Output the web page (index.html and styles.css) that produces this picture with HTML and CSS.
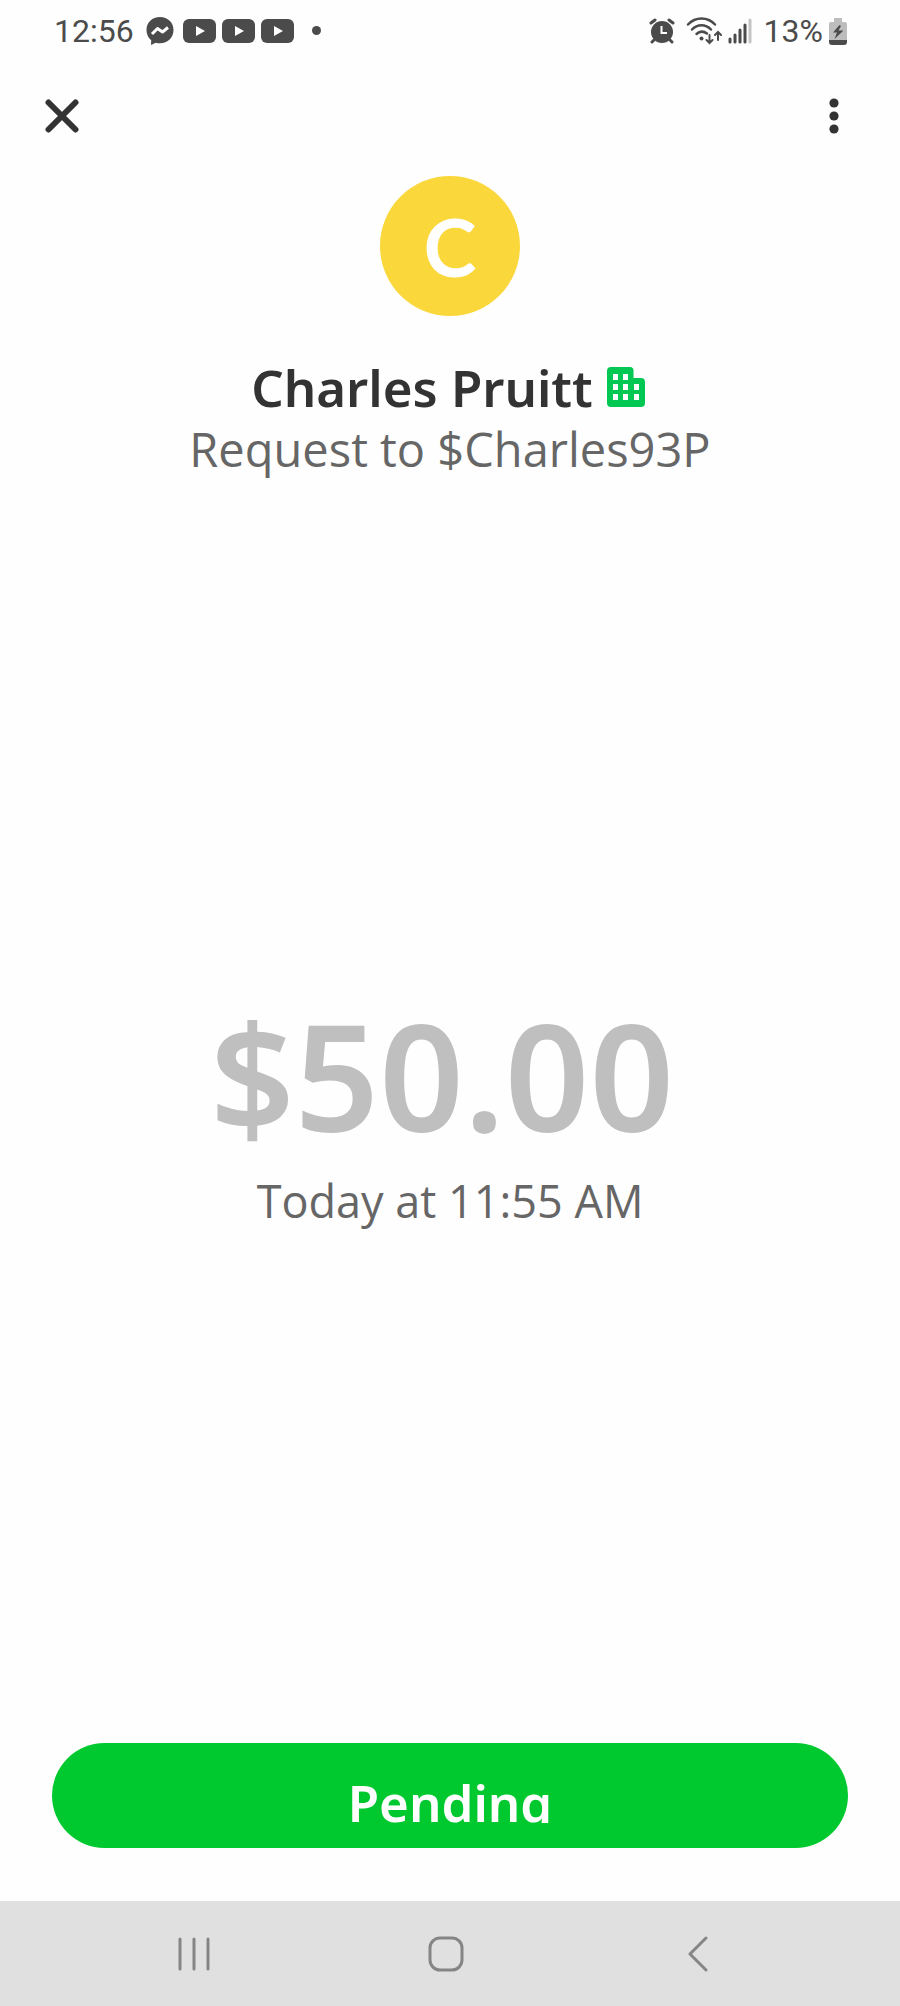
FILE: index.html
```html
<!DOCTYPE html>
<html lang="en">
<head>
<meta charset="utf-8">
<meta name="viewport" content="width=device-width, initial-scale=1">
<title>Payment request</title>
<link rel="stylesheet" href="styles.css">
</head>
<body>
<div class="screen">
  <div class="status">
    <div class="status-group">
      <span class="status-text">12:56</span>
      <svg class="messenger" width="28" height="28" viewBox="0 0 28 28"><path fill="#4b4b4b" d="M14 0C6.2 0 .5 5.400.5 13c0 4.200 1.700 7.800 4.700 10.200L5 28l4.700-2.300c1.400.4 2.800.6 4.300.6 7.800 0 13.500-5.600 13.500-13.200S21.800 0 14 0z"/><path fill="none" stroke="#fff" stroke-width="3" stroke-linejoin="round" d="M6 17l5.500-5.500 5 3.500 5.500-4.500"/></svg>
      <div class="videos">
        <svg width="33" height="24" viewBox="0 0 33 24"><rect width="33" height="24" rx="6" fill="#4b4b4b"/><path fill="#fff" d="M13 7l9 5-9 5z"/></svg>
        <svg width="33" height="24" viewBox="0 0 33 24"><rect width="33" height="24" rx="6" fill="#4b4b4b"/><path fill="#fff" d="M13 7l9 5-9 5z"/></svg>
        <svg width="33" height="24" viewBox="0 0 33 24"><rect width="33" height="24" rx="6" fill="#4b4b4b"/><path fill="#fff" d="M13 7l9 5-9 5z"/></svg>
      </div>
      <span class="more-dot"></span>
    </div>
    <div class="status-group">
      <svg width="26" height="26" viewBox="0 0 26 26"><circle cx="13" cy="14" r="11" fill="#4b4b4b"/><path fill="none" stroke="#4b4b4b" stroke-width="3" stroke-linecap="round" d="M2 5l4-3M24 5l-4-3M5 22l-2 2M21 22l2 2"/><path fill="none" stroke="#fff" stroke-width="2" d="M12.500 8v7H18"/></svg>
      <svg class="wifi" width="36" height="28" viewBox="0 0 36 28"><g fill="none" stroke="#4b4b4b" stroke-width="2.500" stroke-linecap="round"><path d="M2 7.500C9.500-.5 21.500-.5 29 7.500M6 12.500c5.500-5.700 13.500-5.700 19 0M10.500 17c3.200-3 7-3 10.500-.5"/><path stroke-width="2" d="M23.500 18v8M20.500 23l3 3 3-3M32 23v-8M29 18l3-3 3 3"/></g><circle cx="15.500" cy="21.500" r="2" fill="#4b4b4b"/></svg>
      <svg class="signal" width="24" height="26" viewBox="0 0 24 26"><path fill="none" stroke="#4b4b4b" stroke-width="3" stroke-linecap="round" d="M2 21v3M7 17v7M12 12v12M17 7v17"/><path stroke="#c4c4c4" stroke-width="3" stroke-linecap="round" d="M22 2v22"/></svg>
      <span class="status-text percent">13%</span>
      <svg width="18" height="28" viewBox="0 0 18 28"><path fill="#bdbdbd" d="M5 1h8v4h3q2 0 2 2v16H0V7q0-2 2-2h3z"/><path fill="#4b4b4b" d="M0 23h18v2q0 3-3 3H3q-3 0-3-3zM10.500 8L4 15.500h4L5.500 22l9-8.500h-5L12 9z"/></svg>
    </div>
  </div>

  <header class="toolbar">
    <button class="icon-button" type="button" aria-label="Close"><svg width="34" height="34" viewBox="0 0 34 34"><path stroke="#333" stroke-width="6" stroke-linecap="round" d="M3.500 3.500l27 27M30.500 3.500l-27 27"/></svg></button>
    <button class="icon-button" type="button" aria-label="More options"><svg width="10" height="36" viewBox="0 0 10 36"><g fill="#333"><circle cx="5" cy="5" r="4.600"/><circle cx="5" cy="18" r="4.600"/><circle cx="5" cy="31" r="4.600"/></g></svg></button>
  </header>

  <main class="content">
    <section class="person">
      <div class="avatar">C</div>
      <div class="name-row">
        <h1 class="name">Charles Pruitt</h1>
        <svg width="38" height="40" viewBox="0 0 38 40"><path fill="#00c853" d="M4 0h19q3.500 0 3.500 3.500V11H34q4 0 4 4v21q0 4-4 4H4q-4 0-4-4V4q0-4 4-4z"/><g fill="#fff"><path d="M6 7h5v6H6zM16 7h5v6h-5zM6 17h5v6H6zM16 17h5v6h-5zM27 17h5v6h-5zM6 27h5v6H6zM16 27h5v6h-5zM27 27h5v6h-5z"/></g></svg>
      </div>
      <p class="detail">Request to $Charles93P</p>
    </section>
    <section class="payment">
      <p class="amount">$50.00</p>
      <p class="detail date">Today at 11:55 AM</p>
    </section>
    <button class="pending" type="button"><span class="pending-label">Pending</span></button>
  </main>

  <nav class="system-nav">
    <button class="icon-button" type="button" aria-label="Recent apps"><svg width="32" height="34" viewBox="0 0 32 34"><path stroke="#858585" stroke-width="3" stroke-linecap="round" d="M2 2v30M16 2v30M30 2v30"/></svg></button>
    <button class="icon-button" type="button" aria-label="Home"><svg width="36" height="36" viewBox="0 0 36 36"><rect x="2" y="2" width="32" height="32" rx="10" fill="none" stroke="#858585" stroke-width="3"/></svg></button>
    <button class="icon-button" type="button" aria-label="Back"><svg width="20" height="36" viewBox="0 0 20 36"><path fill="none" stroke="#858585" stroke-width="3" stroke-linecap="round" stroke-linejoin="round" d="M18 2L2 18l16 16"/></svg></button>
  </nav>
</div>
</body>
</html>
```
FILE: styles.css
```css
* {
  box-sizing: border-box;
}

body {
  margin: 0;
  background: #fefefe;
  color: #333;
  font-family: "Open Sans", sans-serif;
}

h1,
p {
  margin: 0;
}

svg {
  display: block;
  flex: none;
}

button {
  border: 0;
  padding: 0;
  font: inherit;
}

.screen {
  display: flex;
  flex-direction: column;
  min-height: 100vh;
}

.status {
  display: flex;
  justify-content: space-between;
  height: 61px;
  padding: 0 53px 0 54px;
}

.status-group,
.videos {
  display: flex;
  align-items: center;
}

.status-text {
  color: #4b4b4b;
  font-family: Roboto, sans-serif;
  font-size: 32px;
}

.messenger {
  margin: 0 9px 0 12px;
}

.videos {
  gap: 6px;
}

.more-dot {
  width: 9px;
  height: 9px;
  margin-left: 18px;
  border-radius: 50%;
  background: #4b4b4b;
}

.wifi {
  margin: 0 6px 0 11px;
}

.percent {
  margin: 0 6px 0 12px;
}

.toolbar {
  display: flex;
  align-items: center;
  justify-content: space-between;
  height: 109px;
  padding: 0 61px 0 45px;
}

.icon-button {
  background: none;
}

.content {
  display: flex;
  flex: 1;
  flex-direction: column;
  padding: 6px 52px 53px;
}

.person,
.payment {
  display: flex;
  flex-direction: column;
  align-items: center;
}

.avatar {
  display: grid;
  place-items: center;
  width: 140px;
  height: 140px;
  border-radius: 50%;
  background: #fad83b;
  color: #fff;
  font-family: Lato, sans-serif;
  font-size: 80px;
  font-weight: 700;
  line-height: 80px;
}

.name-row {
  display: flex;
  align-items: center;
  gap: 14px;
  margin-top: 39px;
  padding-right: 4px;
}

.name {
  font-family: "Noto Sans", sans-serif;
  font-size: 51px;
  font-weight: 600;
  line-height: 64px;
}

.detail {
  color: #666;
  font-size: 47px;
  line-height: 60px;
}

.date {
  font-size: 45px;
}

.payment {
  flex: 1;
  justify-content: center;
  padding-bottom: 12px;
}

.amount {
  padding-right: 16px;
  color: #bfbfbf;
  font-family: "Noto Sans", sans-serif;
  font-size: 148px;
  font-weight: 600;
  line-height: 192px;
}

.pending {
  height: 105px;
  border-radius: 53px;
  background: #00c92f;
  color: #fff;
}

.pending-label {
  display: block;
  height: 48px;
  margin-top: 6px;
  overflow: hidden;
  font-family: "Noto Sans", sans-serif;
  font-size: 51px;
  font-weight: 600;
  line-height: 54px;
}

.system-nav {
  display: grid;
  grid-template-columns: repeat(3, 1fr);
  justify-items: center;
  align-items: center;
  height: 105px;
  padding: 0 76px 0 68px;
  background: #e0e0e0;
}
```
